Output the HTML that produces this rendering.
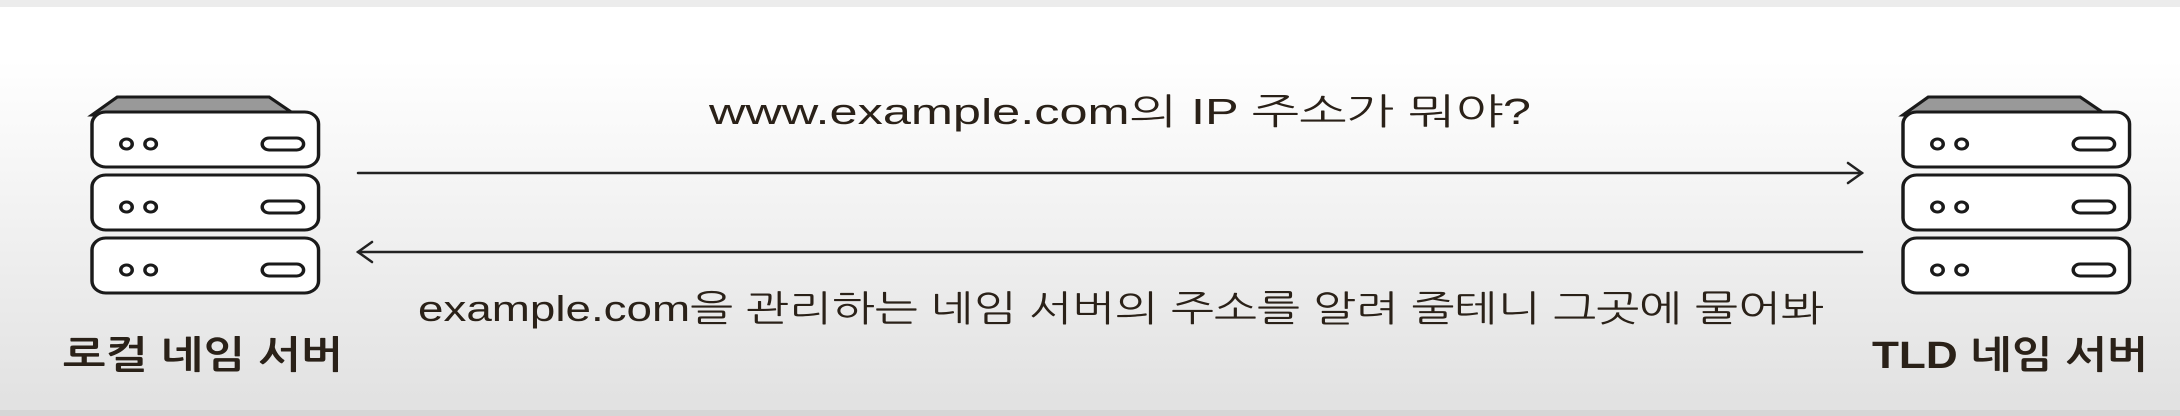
<!DOCTYPE html>
<html><head><meta charset="utf-8"><style>
html,body{margin:0;padding:0}
body{width:2180px;height:416px;overflow:hidden;background:linear-gradient(#fff 0px,#fff 60px,#f3f3f3 200px,#e2e2e2 400px);}
</style></head><body>
<svg width="2180" height="416" xmlns="http://www.w3.org/2000/svg" style="position:absolute;left:0;top:0">
<rect x="0" y="0" width="2180" height="7" fill="#ececec"/>
<rect x="0" y="410" width="2180" height="6" fill="#d6d6d6"/>
<defs>
<g id="srv" stroke="#1a1a1a" stroke-width="3" fill="#fff">
  <path d="M22 0 L154 0 L177 18 L0 18 Z" fill="#999"/>
  <g id="u">
    <rect x="0" y="15" width="197" height="55" rx="12"/>
    <circle cx="30" cy="47" r="5"/><circle cx="51" cy="47" r="5"/>
    <rect x="148" y="41" width="36" height="12" rx="6"/>
  </g>
  <path d="M8 80 L189 80" stroke-width="2"/>
  <use href="#u" y="63"/>
  <use href="#u" y="126"/>
</g>
</defs>
<g transform="translate(92,97) scale(1.15,1)"><use href="#srv"/></g>
<g transform="translate(1903,97) scale(1.15,1)"><use href="#srv"/></g>
<g stroke="#222" stroke-width="2.5" fill="none" stroke-linecap="round">
  <path d="M358 173 L1862 173"/><path d="M1848 163 L1862 173 L1848 183"/>
  <path d="M358 252 L1862 252"/><path d="M372 242 L358 252 L372 262"/>
</g>
<g font-family="'Liberation Sans','NanumGothic','Noto Sans CJK KR',sans-serif" fill="#2a2118">
<text x="709" y="124" font-size="36" textLength="822" lengthAdjust="spacingAndGlyphs">www.example.com의 IP 주소가 뭐야?</text>
<text x="418" y="321" font-size="36" textLength="1406" lengthAdjust="spacingAndGlyphs">example.com을 관리하는 네임 서버의 주소를 알려 줄테니 그곳에 물어봐</text>
<text x="63" y="368" font-size="38" font-weight="bold" textLength="280" lengthAdjust="spacingAndGlyphs">로컬 네임 서버</text>
<text x="1872" y="368" font-size="38" font-weight="bold" textLength="276" lengthAdjust="spacingAndGlyphs">TLD 네임 서버</text>
</g>
</svg>
</body></html>
